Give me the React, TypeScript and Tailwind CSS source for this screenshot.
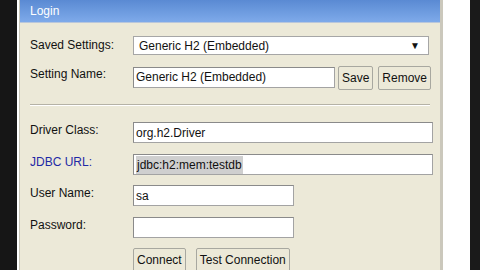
import React from "react";

const font = { fontFamily: '"Liberation Sans", Arial, sans-serif' };

const Label: React.FC<{ text: string; blue?: boolean; lift?: string }> = ({
  text,
  blue,
  lift = "pb-[5px]",
}) => (
  <div
    className={
      "w-[103px] shrink-0 text-[12px] leading-none " +
      lift +
      (blue ? " text-[#1f2aa6]" : " text-[#111]")
    }
  >
    {text}
  </div>
);

const Field: React.FC<{ value?: string; w: string; selected?: boolean }> = ({
  value,
  w,
  selected,
}) => (
  <div
    className={
      w +
      " h-[21px] bg-white border border-[#a3a3a3] border-t-[#8a8a8a] border-l-[#8a8a8a] flex items-center pl-[2px] text-[12px] text-[#111]"
    }
  >
    {selected ? <span className="bg-[#cfcfcf] px-[1px]">{value}</span> : value}
  </div>
);

const Btn: React.FC<{ text: string }> = ({ text }) => (
  <button className="h-[24px] px-[3px] bg-[#ece9d8] border border-[#a8a8a0] rounded-[2px] text-[12px] text-[#111] leading-none">
    {text}
  </button>
);

export default function App() {
  return (
    <div className="w-[480px] h-[270px] overflow-hidden bg-[#1a1a1a] flex" style={font}>
      <div className="w-[17px] shrink-0 bg-[#161616]" />
      <div className="w-[453px] shrink-0 bg-white pl-[2px] pr-[27px] flex">
        <div className="flex-1 bg-[#ece9d8] border-l border-r-[3px] border-l-[#c8c5b8] border-r-[#cbc8bc] flex flex-col">
          <div className="h-[23px] shrink-0 bg-gradient-to-b from-[#5a8ad3] to-[#7eaaea] border-b border-[#b9c7dc] flex items-center pl-[10px] text-[12px] text-white">
            Login
          </div>
          <div className="pl-[10px] flex flex-col">
            <div className="flex items-center mt-[13px] h-[19px]">
              <Label text="Saved Settings:" lift="pb-[2px]" />
              <div className="w-[296px] h-[19px] bg-white border border-[#a6a6a6] flex items-center pl-[5px] pr-[8px] text-[12px] text-[#111]">
                <span className="flex-1">Generic H2 (Embedded)</span>
                <span className="text-[10px]">▼</span>
              </div>
            </div>
            <div className="flex items-center mt-[10px] h-[24px]">
              <Label text="Setting Name:" lift="pb-[6px]" />
              <Field w="w-[202px]" value="Generic H2 (Embedded)" />
              <div className="ml-[3px]">
                <Btn text="Save" />
              </div>
              <div className="ml-[5px]">
                <Btn text="Remove" />
              </div>
            </div>
            <div className="mt-[15px] mr-[10px] h-[2px] border-t border-[#b5b2a6] border-b border-b-white" />
            <div className="flex items-center mt-[16px] h-[21px]">
              <Label text="Driver Class:" />
              <Field w="w-[300px]" value="org.h2.Driver" />
            </div>
            <div className="flex items-center mt-[11px] h-[21px]">
              <Label text="JDBC URL:" blue />
              <Field w="w-[300px]" value="jdbc:h2:mem:testdb" selected />
            </div>
            <div className="flex items-center mt-[10px] h-[21px]">
              <Label text="User Name:" />
              <Field w="w-[161px]" value="sa" />
            </div>
            <div className="flex items-center mt-[11px] h-[21px]">
              <Label text="Password:" />
              <Field w="w-[161px]" />
            </div>
            <div className="flex items-center mt-[10px] pl-[103px] gap-[10px]">
              <Btn text="Connect" />
              <Btn text="Test Connection" />
            </div>
          </div>
        </div>
      </div>
    </div>
  );
}
